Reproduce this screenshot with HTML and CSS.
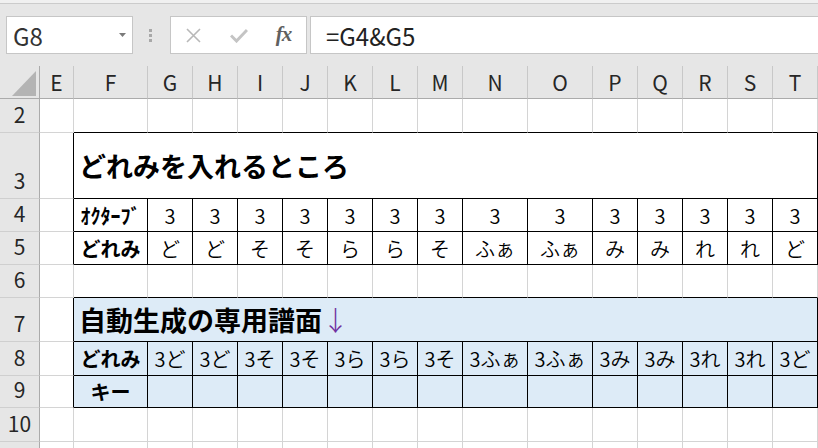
FILE: index.html
```html
<!DOCTYPE html>
<html lang="ja">
<head>
    <meta charset="UTF-8">
    <meta name="viewport" content="width=device-width, initial-scale=1.0">
    <title>どれみ - Excel</title>
    <link rel="stylesheet" href="styles.css">
</head>
<body>
    <div class="toolbar">
        <div class="name-box">
            <span>G8</span>
            <svg class="drop" width="7" height="4" viewBox="0 0 7 4"><path d="M0 0H7L3.5 4Z" fill="#7a7a7a"/></svg>
        </div>
        <svg class="handle" width="4" height="13" viewBox="0 0 4 13">
            <rect x="0" y="0" width="3" height="3" fill="#a8a8a8"/>
            <rect x="0" y="5" width="3" height="3" fill="#a8a8a8"/>
            <rect x="0" y="10" width="3" height="3" fill="#a8a8a8"/>
        </svg>
        <div class="fx-buttons">
            <span class="fx-btn">
                <svg width="15" height="15" viewBox="0 0 15 15"><path d="M1 1L14 14M14 1L1 14" stroke="#b8b8b8" stroke-width="1.6" fill="none"/></svg>
            </span>
            <span class="fx-btn">
                <svg width="18" height="15" viewBox="0 0 18 15"><polyline points="1,7.5 6.5,13 17,2" stroke="#c4c4c4" stroke-width="3" fill="none"/></svg>
            </span>
            <span class="fx-btn fx">fx</span>
        </div>
        <div class="formula">=G4&amp;G5</div>
    </div>

    <div class="sheet">
        <div class="row head">
            <div class="c corner"><span class="select-all"></span></div>
            <div class="c">E</div>
            <div class="c">F</div>
            <div class="c">G</div>
            <div class="c">H</div>
            <div class="c">I</div>
            <div class="c">J</div>
            <div class="c">K</div>
            <div class="c">L</div>
            <div class="c">M</div>
            <div class="c">N</div>
            <div class="c">O</div>
            <div class="c">P</div>
            <div class="c">Q</div>
            <div class="c">R</div>
            <div class="c">S</div>
            <div class="c">T</div>
        </div>

        <div class="row r2 edge">
            <div class="c rh">2</div>
            <div class="c"></div><div class="c"></div><div class="c"></div><div class="c"></div>
            <div class="c"></div><div class="c"></div><div class="c"></div><div class="c"></div>
            <div class="c"></div><div class="c"></div><div class="c"></div><div class="c"></div>
            <div class="c"></div><div class="c"></div><div class="c"></div><div class="c"></div>
        </div>

        <div class="row r3 boxed">
            <div class="c rh">3</div>
            <div class="c"></div>
            <div class="c title">どれみを入れるところ</div>
        </div>

        <div class="row r4 boxed">
            <div class="c rh">4</div>
            <div class="c"></div>
            <div class="c label">ｵｸﾀｰﾌﾞ</div>
            <div class="c">3</div><div class="c">3</div><div class="c">3</div><div class="c">3</div>
            <div class="c">3</div><div class="c">3</div><div class="c">3</div><div class="c">3</div>
            <div class="c">3</div><div class="c">3</div><div class="c">3</div><div class="c">3</div>
            <div class="c">3</div><div class="c">3</div>
        </div>

        <div class="row r5 boxed">
            <div class="c rh">5</div>
            <div class="c"></div>
            <div class="c label">どれみ</div>
            <div class="c">ど</div>
            <div class="c">ど</div>
            <div class="c">そ</div>
            <div class="c">そ</div>
            <div class="c">ら</div>
            <div class="c">ら</div>
            <div class="c">そ</div>
            <div class="c">ふぁ</div>
            <div class="c">ふぁ</div>
            <div class="c">み</div>
            <div class="c">み</div>
            <div class="c">れ</div>
            <div class="c">れ</div>
            <div class="c">ど</div>
        </div>

        <div class="row r6 edge">
            <div class="c rh">6</div>
            <div class="c"></div><div class="c"></div><div class="c"></div><div class="c"></div>
            <div class="c"></div><div class="c"></div><div class="c"></div><div class="c"></div>
            <div class="c"></div><div class="c"></div><div class="c"></div><div class="c"></div>
            <div class="c"></div><div class="c"></div><div class="c"></div><div class="c"></div>
        </div>

        <div class="row r7 boxed blue">
            <div class="c rh">7</div>
            <div class="c"></div>
            <div class="c title">自動生成の専用譜面<span class="arrow">↓</span></div>
        </div>

        <div class="row r8 boxed blue">
            <div class="c rh">8</div>
            <div class="c"></div>
            <div class="c label">どれみ</div>
            <div class="c">3ど</div>
            <div class="c">3ど</div>
            <div class="c">3そ</div>
            <div class="c">3そ</div>
            <div class="c">3ら</div>
            <div class="c">3ら</div>
            <div class="c">3そ</div>
            <div class="c">3ふぁ</div>
            <div class="c">3ふぁ</div>
            <div class="c">3み</div>
            <div class="c">3み</div>
            <div class="c">3れ</div>
            <div class="c">3れ</div>
            <div class="c">3ど</div>
        </div>

        <div class="row r9 boxed blue">
            <div class="c rh">9</div>
            <div class="c"></div>
            <div class="c label">キー</div>
            <div class="c"></div><div class="c"></div><div class="c"></div><div class="c"></div>
            <div class="c"></div><div class="c"></div><div class="c"></div><div class="c"></div>
            <div class="c"></div><div class="c"></div><div class="c"></div><div class="c"></div>
            <div class="c"></div><div class="c"></div>
        </div>

        <div class="row r10">
            <div class="c rh">10</div>
            <div class="c"></div><div class="c"></div><div class="c"></div><div class="c"></div>
            <div class="c"></div><div class="c"></div><div class="c"></div><div class="c"></div>
            <div class="c"></div><div class="c"></div><div class="c"></div><div class="c"></div>
            <div class="c"></div><div class="c"></div><div class="c"></div><div class="c"></div>
        </div>

        <!-- row 11 only peeks in at the bottom -->
        <div class="row r11">
            <div class="c rh"></div>
            <div class="c"></div><div class="c"></div><div class="c"></div><div class="c"></div>
            <div class="c"></div><div class="c"></div><div class="c"></div><div class="c"></div>
            <div class="c"></div><div class="c"></div><div class="c"></div><div class="c"></div>
            <div class="c"></div><div class="c"></div><div class="c"></div><div class="c"></div>
        </div>
    </div>
</body>
</html>
```

FILE: styles.css
```css
body {
    margin: 0;
    font-family: "Noto Sans CJK JP", "Noto Sans", sans-serif;
    color: #000;
    background: #fff;
    overflow: hidden;
}

/* formula bar strip */
.toolbar {
    height: 66px;
    box-sizing: border-box;
    padding-top: 16px;
    display: flex;
    align-items: flex-start;
    background: linear-gradient(#f0f0f0 0 3px, #cbcbcb 3px 4px, #e6e6e6 4px);
}

.name-box {
    margin-left: 6px;
    width: 127px;
    height: 38px;
    box-sizing: border-box;
    border: 1px solid #c6c6c6;
    background: #fff;
    display: flex;
    align-items: center;
    justify-content: space-between;
    padding: 0 6px 0 6px;
    font-size: 24px;
    color: #333;
}

.handle {
    margin: 13px 0 0 16px;
}

.fx-buttons {
    margin-left: 17px;
    width: 137px;
    height: 38px;
    box-sizing: border-box;
    border: 1px solid #c6c6c6;
    background: #fff;
    display: flex;
}

.fx-btn {
    width: 45px;
    display: flex;
    align-items: center;
    justify-content: center;
}

.fx {
    font-family: "Liberation Serif", serif;
    font-style: italic;
    font-weight: bold;
    font-size: 21px;
    color: #606060;
    letter-spacing: -1px;
    padding-bottom: 2px;
}

.formula {
    margin-left: 3px;
    margin-right: -2px;
    flex: 1;
    height: 38px;
    box-sizing: border-box;
    border: 1px solid #c6c6c6;
    background: #fff;
    display: flex;
    align-items: center;
    padding-left: 15px;
    font-size: 24px;
    color: #222;
}

/* grid */
.row {
    display: grid;
    grid-template-columns: 40px 34px 74px repeat(7, 45px) 65px 65px repeat(5, 45px);
}

.c {
    box-sizing: border-box;
    min-width: 0;
    border-right: 1px solid #d4d4d4;
    border-bottom: 1px solid #d4d4d4;
    display: flex;
    align-items: center;
    justify-content: center;
    font-size: 20px;
    font-weight: 350;
    white-space: nowrap;
    overflow: hidden;
}

.head { height: 33px; }
.r2 { height: 34px; }
.r3 { height: 66px; }
.r4 { height: 33px; }
.r5 { height: 33px; }
.r6 { height: 33px; }
.r7 { height: 44px; }
.r8 { height: 34px; }
.r9 { height: 32px; }
.r10 { height: 34px; }
.r11 { height: 34px; }

.head .c {
    background: #e6e6e6;
    border-right-color: #c8c8c8;
    border-bottom-color: #ababab;
    color: #262626;
    font-size: 21px;
    font-weight: normal;
}

.head .corner {
    border-right-color: #ababab;
    align-items: flex-end;
    justify-content: flex-end;
    padding: 0 3px 2px 0;
}

.select-all {
    width: 24px;
    height: 25px;
    background: #b4b4b4;
    clip-path: polygon(100% 0, 100% 100%, 0 100%);
}

.rh {
    background: #e6e6e6;
    border-right-color: #ababab;
    border-bottom-color: #cfcfcf;
    align-items: flex-end;
    padding-bottom: 6px;
    line-height: 1.1;
    font-size: 21px;
    font-weight: normal;
    color: #262626;
    overflow: visible;
}

/* black cell borders */
.edge .c:nth-child(n+3) {
    border-bottom-color: #000;
}

.boxed .c:nth-child(2) {
    border-right-color: #000;
}

.boxed .c:nth-child(n+3) {
    border-right-color: #000;
    border-bottom-color: #000;
}

.blue .c:nth-child(n+3) {
    background: #ddebf7;
}

.title {
    grid-column: 3 / -1;
    justify-content: flex-start;
    padding-left: 5px;
    font-size: 27px;
    font-weight: bold;
}

.arrow {
    font-weight: 300;
    color: #7030a0;
}

.label {
    font-weight: bold;
}
```
